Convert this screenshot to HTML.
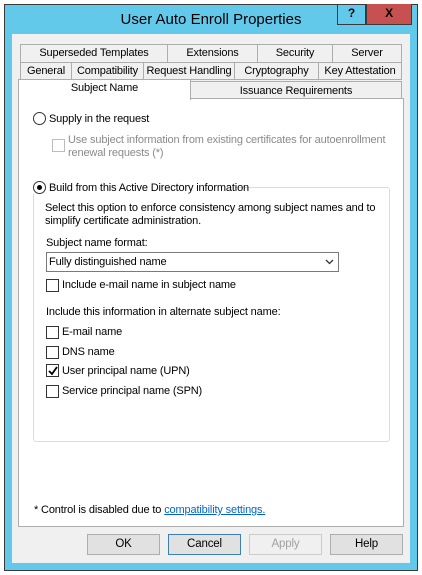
<!DOCTYPE html><html><head><style>
*{margin:0;padding:0;box-sizing:border-box}
body{width:422px;height:575px;background:#fff;position:relative;font-family:"Liberation Sans",sans-serif;font-size:11px;letter-spacing:-0.15px;color:#000;overflow:hidden}
.a{position:absolute}
.win{left:4px;top:4px;width:414px;height:567px;background:#63c9ea;border:1px solid #3a3a3a}
.client{left:12px;top:34px;width:398px;height:529px;background:#f0f0f0}
.tab{position:absolute;background:#f0f0f0;border:1px solid #adadad;text-align:center;line-height:17px;white-space:nowrap}
.panel{left:18px;top:98px;width:386px;height:429px;background:#fff;border:1px solid #adadad}
.cb{position:absolute;width:13px;height:13px;border:1px solid #333;background:#fff}
.rb{position:absolute;width:13px;height:13px;border:1px solid #333;border-radius:50%;background:#fff}
.t{position:absolute;white-space:nowrap;line-height:14px}
.btn{position:absolute;top:534px;width:73px;height:21px;border:1px solid #adadad;background:#e1e1e1;text-align:center;line-height:19px;font-size:11.5px}
</style></head><body>
<div class="a win"></div>
<div class="t" style="left:0;width:422px;text-align:center;top:10px;font-size:15px;line-height:20px;letter-spacing:0">User Auto Enroll Properties</div>
<div class="a" style="left:337px;top:4px;width:29px;height:21px;border:1px solid #3a3a3a;border-top:none;text-align:center;font-weight:bold;font-size:12px;line-height:18px">?</div>
<div class="a" style="left:366px;top:4px;width:46px;height:21px;background:#c75050;border:1px solid #3a3a3a;border-top:none;text-align:center;font-weight:bold;font-size:12px;line-height:18px">X</div>
<div class="a client"></div>
<div class="tab" style="left:20px;top:44px;width:148px;height:19px">Superseded Templates</div>
<div class="tab" style="left:167px;top:44px;width:91px;height:19px">Extensions</div>
<div class="tab" style="left:257px;top:44px;width:76px;height:19px">Security</div>
<div class="tab" style="left:332px;top:44px;width:70px;height:19px">Server</div>
<div class="tab" style="left:20px;top:62px;width:52px;height:18px">General</div>
<div class="tab" style="left:71px;top:62px;width:73px;height:18px">Compatibility</div>
<div class="tab" style="left:143px;top:62px;width:92px;height:18px">Request Handling</div>
<div class="tab" style="left:234px;top:62px;width:85px;height:18px">Cryptography</div>
<div class="tab" style="left:318px;top:62px;width:84px;height:18px">Key Attestation</div>
<div class="tab" style="left:190px;top:81px;width:212px;height:19px;line-height:18px">Issuance Requirements</div>
<div class="a panel"></div>
<div class="a" style="left:18px;top:79px;width:173px;height:21px;background:#fff;border:1px solid #adadad;border-bottom:none;text-align:center;line-height:16px">Subject Name</div>
<div class="rb" style="left:33px;top:112px"></div>
<div class="t" style="left:49px;top:112px">Supply in the request</div>
<div class="cb" style="left:52px;top:139px;border-color:#bcbcbc"></div>
<div class="t" style="left:68px;top:134px;color:#8a8a8a;line-height:13px">Use subject information from existing certificates for autoenrollment<br>renewal requests (*)</div>
<div class="a" style="left:33px;top:187px;width:357px;height:255px;border:1px solid #dcdcdc;border-radius:3px"></div>
<div class="a" style="left:30px;top:180px;width:205px;height:14px;background:#fff"></div>
<div class="rb" style="left:33px;top:181px"><div class="a" style="left:3px;top:3px;width:5px;height:5px;border-radius:50%;background:#000"></div></div>
<div class="t" style="left:49px;top:181px">Build from this Active Directory information</div>
<div class="t" style="left:45px;top:202px;line-height:13px">Select this option to enforce consistency among subject names and to<br>simplify certificate administration.</div>
<div class="t" style="left:46px;top:236px">Subject name format:</div>
<div class="a" style="left:46px;top:252px;width:293px;height:20px;border:1px solid #7a7a7a;background:#fff"></div>
<div class="t" style="left:49px;top:255px">Fully distinguished name</div>
<svg class="a" style="left:325px;top:259px" width="9" height="6"><path d="M1 1L4.5 4.5L8 1" stroke="#333" stroke-width="1.3" fill="none"/></svg>
<div class="cb" style="left:46px;top:279px"></div>
<div class="t" style="left:62px;top:278px">Include e-mail name in subject name</div>
<div class="t" style="left:46px;top:305px">Include this information in alternate subject name:</div>
<div class="cb" style="left:46px;top:326px"></div><div class="t" style="left:62px;top:325px">E-mail name</div>
<div class="cb" style="left:46px;top:346px"></div><div class="t" style="left:62px;top:345px">DNS name</div>
<div class="cb" style="left:46px;top:364px"><svg class="a" style="left:1px;top:1px" width="10" height="10"><path d="M1 5L4 8L9 1" stroke="#000" stroke-width="1.8" fill="none"/></svg></div><div class="t" style="left:62px;top:364px">User principal name (UPN)</div>
<div class="cb" style="left:46px;top:385px"></div><div class="t" style="left:62px;top:384px">Service principal name (SPN)</div>
<div class="t" style="left:34px;top:503px">* Control is disabled due to <span style="color:#0066cc;text-decoration:underline">compatibility settings.</span></div>
<div class="btn" style="left:87px">OK</div>
<div class="btn" style="left:168px;border-color:#3c7fb1">Cancel</div>
<div class="btn" style="left:249px;background:#f0f0f0;border-color:#cccccc;color:#a0a0a0">Apply</div>
<div class="btn" style="left:330px">Help</div>
</body></html>
